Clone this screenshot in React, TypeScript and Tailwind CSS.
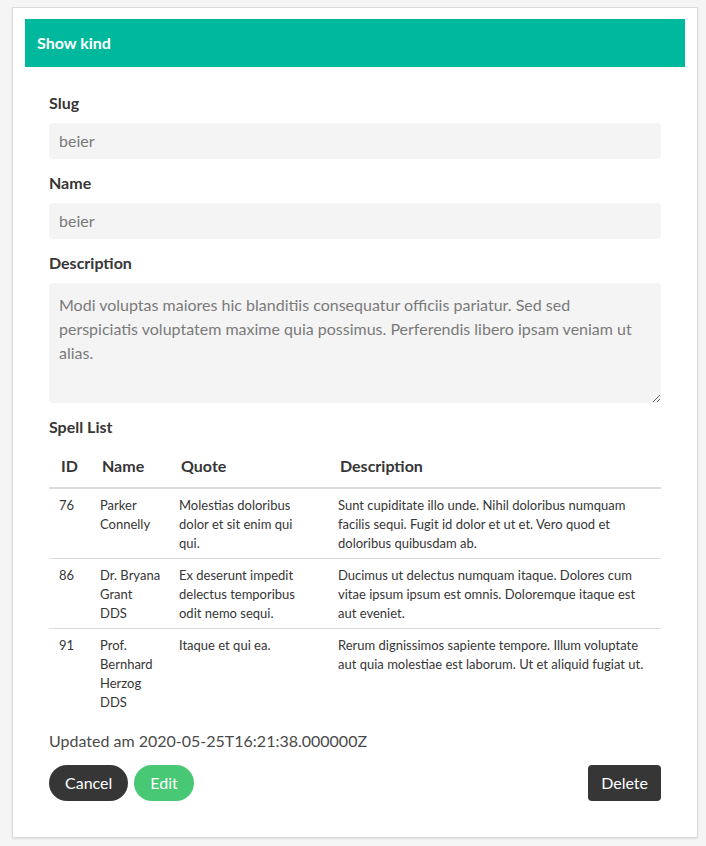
import React from "react";

const rows = [
  {
    id: "76",
    name: ["Parker", "Connelly"],
    quote: ["Molestias doloribus", "dolor et sit enim qui", "qui."],
    desc: "Sunt cupiditate illo unde. Nihil doloribus numquam facilis sequi. Fugit id dolor et ut et. Vero quod et doloribus quibusdam ab.",
  },
  {
    id: "86",
    name: ["Dr. Bryana", "Grant", "DDS"],
    quote: ["Ex deserunt impedit", "delectus temporibus", "odit nemo sequi."],
    desc: "Ducimus ut delectus numquam itaque. Dolores cum vitae ipsum ipsum est omnis. Doloremque itaque est aut eveniet.",
  },
  {
    id: "91",
    name: ["Prof.", "Bernhard", "Herzog", "DDS"],
    quote: ["Itaque et qui ea."],
    desc: "Rerum dignissimos sapiente tempore. Illum voluptate aut quia molestiae est laborum. Ut et aliquid fugiat ut.",
  },
];

export default function App() {
  return (
    <div
      className="min-h-[846px] bg-[#f5f5f5] pl-[12px] pr-[8px] pt-[7px] pb-[9px] text-[#363636]"
      style={{ fontFamily: "Lato, 'Open Sans', sans-serif" }}
    >
      <div className="border border-[#dbdbdb] bg-white shadow-[0_1px_2px_rgba(10,10,10,0.1)] px-[12px] pt-[11px] pb-[36px]">
        <div className="h-[48px] bg-[#00b89c] flex items-center px-[12px]">
          <span className="text-white font-bold text-[16px]">Show kind</span>
        </div>
        <div className="px-[24px] pt-[24px]">
          <label className="block font-bold text-[16px] leading-[24px] mb-[8px]">Slug</label>
          <div className="h-[36px] rounded-[4px] bg-[#f4f4f4] px-[10px] flex items-center text-[16px] text-[#7a7a7a] mb-[12px]">
            beier
          </div>
          <label className="block font-bold text-[16px] leading-[24px] mb-[8px]">Name</label>
          <div className="h-[36px] rounded-[4px] bg-[#f4f4f4] px-[10px] flex items-center text-[16px] text-[#7a7a7a] mb-[12px]">
            beier
          </div>
          <label className="block font-bold text-[16px] leading-[24px] mb-[8px]">Description</label>
          <textarea
            readOnly
            className="block w-full h-[120px] rounded-[4px] bg-[#f4f4f4] px-[10px] py-[10px] text-[16px] leading-[24px] text-[#7a7a7a] outline-none"
            style={{ fontFamily: "inherit" }}
            value="Modi voluptas maiores hic blanditiis consequatur officiis pariatur. Sed sed perspiciatis voluptatem maxime quia possimus. Perferendis libero ipsam veniam ut alias."
          />
          <div className="font-bold text-[16px] leading-[24px] mt-[12px] mb-[8px]">Spell List</div>
          <table className="w-full table-fixed border-collapse text-left">
            <colgroup>
              <col className="w-[41px]" />
              <col className="w-[79px]" />
              <col className="w-[159px]" />
              <col />
            </colgroup>
            <thead>
              <tr className="border-b-2 border-[#dbdbdb]">
                <th className="font-bold text-[16px] leading-[24px] px-[12px] pt-[7px] pb-[9px] align-top">ID</th>
                <th className="font-bold text-[16px] leading-[24px] px-[12px] pt-[7px] pb-[9px] align-top">Name</th>
                <th className="font-bold text-[16px] leading-[24px] px-[12px] pt-[7px] pb-[9px] align-top">Quote</th>
                <th className="font-bold text-[16px] leading-[24px] px-[12px] pt-[7px] pb-[9px] align-top">Description</th>
              </tr>
            </thead>
            <tbody className="text-[13px] leading-[19px]">
              {rows.map((r, i) => (
                <tr key={r.id} className={i < rows.length - 1 ? "border-b border-[#dbdbdb]" : ""}>
                  <td className="align-top pl-[10px] pr-[4px] pt-[7px] pb-[5px]">{r.id}</td>
                  <td className="align-top pl-[10px] pr-[2px] pt-[7px] pb-[5px]">
                    {r.name.map((l) => (
                      <div key={l} className="whitespace-nowrap">{l}</div>
                    ))}
                  </td>
                  <td className="align-top pl-[10px] pr-[4px] pt-[7px] pb-[5px]">
                    {r.quote.map((l) => (
                      <div key={l} className="whitespace-nowrap">{l}</div>
                    ))}
                  </td>
                  <td className="align-top pl-[10px] pr-[10px] pt-[7px] pb-[5px]">{r.desc}</td>
                </tr>
              ))}
            </tbody>
          </table>
          <div className="text-[16px] leading-[24px] text-[#4a4a4a] mt-[12px] mb-[12px]">
            Updated am 2020-05-25T16:21:38.000000Z
          </div>
          <div className="flex items-center">
            <button className="h-[36px] rounded-full bg-[#363636] text-white px-[16px] text-[16px]">Cancel</button>
            <button className="h-[36px] rounded-full bg-[#48c774] text-white px-[16px] text-[16px] ml-[6px]">Edit</button>
            <div className="flex-1" />
            <button className="h-[36px] rounded-[4px] bg-[#363636] text-white px-[13px] text-[16px]">Delete</button>
          </div>
        </div>
      </div>
    </div>
  );
}
